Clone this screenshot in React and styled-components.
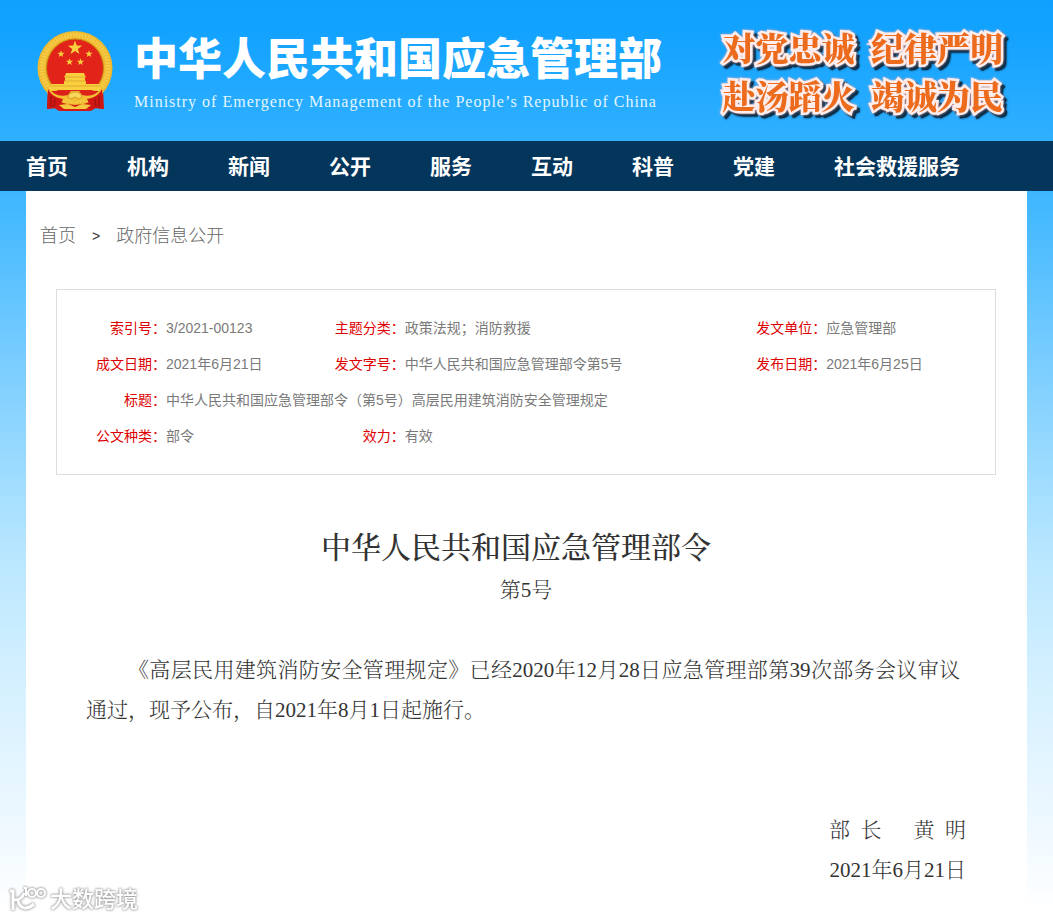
import React from "react";
import styled, { createGlobalStyle } from "styled-components";

const GlobalStyle = createGlobalStyle`
  * {
    box-sizing: border-box;
  }

  body {
    margin: 0;
    background: linear-gradient(
      #10a0ff 0,
      #12a2ff 30px,
      #30b0ff 140px,
      #40b7ff 200px,
      #72caff 340px,
      #96d9ff 450px,
      #bae7ff 560px,
      #d4f0ff 680px,
      #edf8ff 820px,
      #ffffff 910px
    ) no-repeat #fff;
    font-family: "Liberation Sans", "Noto Sans CJK SC", sans-serif;
  }
`;

const Inner = styled.div`
  max-width: 1001px;
  margin: 0 auto;
`;

const HeaderInner = styled(Inner)`
  display: flex;
  align-items: center;
  height: 141px;
  padding: 0 24px 0 11px;
`;

const Emblem = styled.svg`
  flex: none;
  width: 76px;
  height: 82px;
`;

const Brand = styled.div`
  margin-left: 21px;
  padding-top: 8px;
  white-space: nowrap;
`;

const SiteName = styled.h1`
  margin: 0;
  color: #fff;
  font-size: 44px;
  line-height: 54px;
  font-weight: 900;
  font-family: "Noto Sans CJK SC", sans-serif;
`;

const SiteNameEn = styled.p`
  margin: 0;
  color: #e2f6ff;
  font-family: "Liberation Serif", serif;
  font-size: 16px;
  line-height: 38px;
  letter-spacing: 1px;
`;

const Slogan = styled.p`
  margin: 0 0 0 auto;
  color: #ec6b1c;
  font-family: "Noto Serif CJK SC", "Noto Sans CJK SC", serif;
  font-size: 33px;
  line-height: 48px;
  font-weight: 900;
  white-space: nowrap;
  -webkit-text-stroke: 5px #fdeeed;
  paint-order: stroke fill;
  filter: drop-shadow(0 0 1px #f3b9b9) drop-shadow(3px 3px 0 #0d2f4a);
`;

const Nav = styled.nav`
  background: #04355b;
`;

const NavInner = styled(Inner)`
  display: flex;
  gap: 59px;
`;

const NavLink = styled.a`
  padding-top: 2px;
  color: #fff;
  font-size: 21px;
  line-height: 48px;
  font-weight: 700;
  text-decoration: none;
  white-space: nowrap;
`;

const Panel = styled.main`
  max-width: 1001px;
  margin: 0 auto;
  padding: 25px 31px 29px 30px;
  background: #fff;
`;

const Breadcrumb = styled.nav`
  display: flex;
  align-items: center;
  gap: 16px;
  margin-left: -16px;
  color: #333;
  font-size: 14px;
  line-height: 40px;
`;

const Crumb = styled.a`
  color: #666;
  font-size: 18px;
  font-weight: 300;
  text-decoration: none;
`;

const MetaBox = styled.section`
  margin-top: 33px;
  padding: 20px 0;
  border: 1px solid #ddd;
`;

const MetaTable = styled.table`
  width: 100%;
  table-layout: fixed;
  border-collapse: collapse;
  font-size: 14px;
  line-height: 20px;
`;

const Col = styled.col`
  width: ${(p) => p.$width};
`;

const Label = styled.th`
  height: 36px;
  padding: 0;
  color: #d00;
  font-weight: 400;
  text-align: right;
  white-space: nowrap;
`;

const Value = styled.td`
  padding: 0;
  color: #7a7a7a;
  font-weight: 400;
`;

const Article = styled.article`
  padding: 53px 30px 0;
  color: #333;
  font-family: "Liberation Serif", "Noto Serif CJK SC", "Noto Sans CJK SC", serif;
  font-size: 21px;
  line-height: 40px;
  font-weight: 300;
`;

const Title = styled.h2`
  margin: 0;
  padding-right: 20px;
  font-size: 30px;
  line-height: 40px;
  font-weight: 500;
  text-align: center;
`;

const Number = styled.p`
  margin: 2px 0 40px;
  text-align: center;
`;

const Paragraph = styled.p`
  margin: 0;
  padding-right: 6px;
  text-align: justify;
  text-indent: 2em;
`;

const Signature = styled.div`
  margin-top: 80px;
  text-align: right;
`;

const Signer = styled.p`
  display: flex;
  justify-content: flex-end;
  gap: 32px;
  margin: 0;
  white-space: pre;
`;

const SignDate = styled.p`
  margin: 0;
`;

const Watermark = styled.div`
  position: fixed;
  left: 8px;
  bottom: 4px;
  display: flex;
  align-items: center;
  gap: 3px;
  color: #fff;
  font-size: 22px;
  line-height: 30px;
  font-weight: 500;
  filter: drop-shadow(0 0 1px #999) drop-shadow(0 0 1px #bbb);
`;

const navItems = [
  "首页",
  "机构",
  "新闻",
  "公开",
  "服务",
  "互动",
  "科普",
  "党建",
  "社会救援服务",
];

const star = (cx, cy, r) =>
  Array.from({ length: 10 }, (_, i) => {
    const a = (Math.PI / 5) * i - Math.PI / 2;
    const d = i % 2 ? r * 0.4 : r;
    return `${cx + d * Math.cos(a)},${cy + d * Math.sin(a)}`;
  }).join(" ");

const NationalEmblem = () => (
  <Emblem viewBox="0 0 76 82" aria-hidden="true">
    <path d="M11 58 L66 58 L67 79 L58 78 L54 81 L22 81 L18 78 L10 79Z" fill="#d31a16" />
    <ellipse cx="38" cy="38" rx="37.5" ry="37" fill="#efb92e" />
    <ellipse
      cx="38"
      cy="38"
      rx="33"
      ry="33"
      fill="none"
      stroke="#f5cb48"
      strokeWidth="5"
      strokeDasharray="2 1"
    />
    <ellipse cx="38" cy="38" rx="28.5" ry="29" fill="#e2231a" stroke="#c8860f" />
    <g fill="#f8cf3c">
      <polygon points={star(38, 18, 7.5)} />
      <polygon points={star(24, 24, 3.8)} />
      <polygon points={star(52, 24, 3.8)} />
      <polygon points={star(32.5, 32, 3.8)} />
      <polygon points={star(43.5, 32, 3.8)} />
      <path d="M29 43h18l1 3h1l-1 2v3h1v3h13v4h2v2H12v-2h2v-4h13v-3h1v-3l-1-2h1z" />
    </g>
    <path d="M28 47h20M27 51h22M14 56h48" stroke="#d9982a" strokeWidth="0.7" />
    <path d="M13 61h50c-3 5-7 8-12 8l-13-3-13 3c-5 0-9-3-12-8z" fill="#da211a" />
    <path d="M10 56c6 9 13 11 21 9l3-4h8l3 4c8 2 15 0 21-9l-1 10c-7 5-13 5-20 3l-7 3-7-3c-7 2-13 2-20-3z" fill="#f2bd32" />
    <path d="M11 59c4 7 9 9 15 10l-5 11-4-2-7 1zM65 59c-4 7-9 9-15 10l5 11 4-2 7 1z" fill="#cf1713" />
    <path d="M14 66v11M18 69l-1 8M62 66v11M58 69l1 8" stroke="#96100d" />
    <path d="M22 75l9-1 7 3 7-3 9 1-5 4H27z" fill="#f5c93f" />
    <path d="M31 67c1-4 4-5 7-5s6 1 7 5l-3 2-4-2-4 2z" fill="#f8d65a" stroke="#c98414" strokeWidth="0.7" />
  </Emblem>
);

const WatermarkLogo = () => (
  <svg width="39" height="30" viewBox="0 0 39 30" fill="none" stroke="#fff" aria-hidden="true">
    <path d="M2 6h3v19M16 8C15 12 11 15 6 15M10 15c1 8 8 11 16 4" strokeWidth="3" />
    <path d="M16 3h2v8" strokeWidth="2" />
    <circle cx="24" cy="8" r="4" strokeWidth="2" />
    <circle cx="33" cy="8" r="4" strokeWidth="2" />
  </svg>
);

export default function App() {
  return (
    <>
      <GlobalStyle />
      <header>
        <HeaderInner>
          <NationalEmblem />
          <Brand>
            <SiteName>中华人民共和国应急管理部</SiteName>
            <SiteNameEn lang="en">
              Ministry of Emergency Management of the People’s Republic of China
            </SiteNameEn>
          </Brand>
          <Slogan>
            对党忠诚&ensp;纪律严明
            <br />
            赴汤蹈火&ensp;竭诚为民
          </Slogan>
        </HeaderInner>
        <Nav>
          <NavInner>
            {navItems.map((item) => (
              <NavLink key={item} href="#">
                {item}
              </NavLink>
            ))}
          </NavInner>
        </Nav>
      </header>

      <Panel>
        <Breadcrumb>
          <Crumb href="#">首页</Crumb>
          <span>&gt;</span>
          <Crumb href="#">政府信息公开</Crumb>
        </Breadcrumb>

        <MetaBox>
          <MetaTable>
            <colgroup>
              <Col $width="109px" />
              <Col $width="18%" />
              <Col $width="70px" />
              <Col />
              <Col $width="70px" />
              <Col $width="18%" />
            </colgroup>
            <tbody>
              <tr>
                <Label scope="row">索引号：</Label>
                <Value>3/2021-00123</Value>
                <Label scope="row">主题分类：</Label>
                <Value>政策法规；消防救援</Value>
                <Label scope="row">发文单位：</Label>
                <Value>应急管理部</Value>
              </tr>
              <tr>
                <Label scope="row">成文日期：</Label>
                <Value>2021年6月21日</Value>
                <Label scope="row">发文字号：</Label>
                <Value>中华人民共和国应急管理部令第5号</Value>
                <Label scope="row">发布日期：</Label>
                <Value>2021年6月25日</Value>
              </tr>
              <tr>
                <Label scope="row">标题：</Label>
                <Value colSpan={5}>
                  中华人民共和国应急管理部令（第5号）高层民用建筑消防安全管理规定
                </Value>
              </tr>
              <tr>
                <Label scope="row">公文种类：</Label>
                <Value>部令</Value>
                <Label scope="row">效力：</Label>
                <Value colSpan={3}>有效</Value>
              </tr>
            </tbody>
          </MetaTable>
        </MetaBox>

        <Article>
          <Title>中华人民共和国应急管理部令</Title>
          <Number>第5号</Number>
          <Paragraph>
            《高层民用建筑消防安全管理规定》已经2020年12月28日应急管理部第39次部务会议审议通过，现予公布，自2021年8月1日起施行。
          </Paragraph>
          <Signature>
            <Signer>
              <span>部&nbsp;&nbsp;长</span>
              <span>黄&nbsp;&nbsp;明</span>
            </Signer>
            <SignDate>2021年6月21日</SignDate>
          </Signature>
        </Article>
      </Panel>

      <Watermark>
        <WatermarkLogo />
        <span>大数跨境</span>
      </Watermark>
    </>
  );
}
